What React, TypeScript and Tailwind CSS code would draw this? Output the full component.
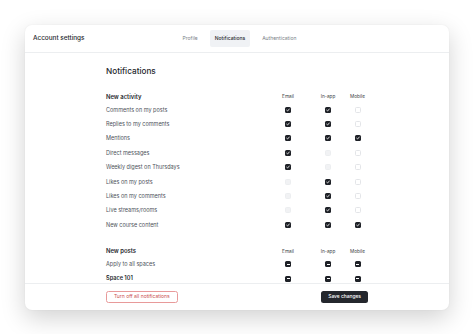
import React from "react"

type Box = "on" | "off" | "dis" | "mixed"

const ACTIVITY: { label: string; email: Box; inapp: Box; mobile: Box }[] = [
  { label: "Comments on my posts", email: "on", inapp: "on", mobile: "off" },
  { label: "Replies to my comments", email: "on", inapp: "on", mobile: "off" },
  { label: "Mentions", email: "on", inapp: "on", mobile: "on" },
  { label: "Direct messages", email: "on", inapp: "dis", mobile: "off" },
  { label: "Weekly digest on Thursdays", email: "on", inapp: "dis", mobile: "off" },
  { label: "Likes on my posts", email: "dis", inapp: "on", mobile: "off" },
  { label: "Likes on my comments", email: "dis", inapp: "on", mobile: "off" },
  { label: "Live streams/rooms", email: "dis", inapp: "on", mobile: "off" },
  { label: "New course content", email: "on", inapp: "on", mobile: "on" },
]

const POSTS: { label: string; bold?: boolean }[] = [
  { label: "Apply to all spaces" },
  { label: "Space 101", bold: true },
]

function Check({ state }: { state: Box }) {
  if (state === "off") {
    return <span className="block size-[6px] rounded-[1.5px] border-[0.5px] border-[#e3e5e8] bg-white" />
  }
  if (state === "dis") {
    return <span className="block size-[6px] rounded-[1.5px] border-[0.5px] border-[#eceef0] bg-[#f1f2f4]" />
  }
  return (
    <span className="grid size-[6px] place-items-center rounded-[1.5px] bg-[#1e2127]">
      {state === "on" ? (
        <svg viewBox="0 0 6 6" className="size-[6px]">
          <path d="M1.7 3.2 L2.6 4 L4.3 2" fill="none" stroke="white" strokeWidth="0.8" strokeLinecap="round" strokeLinejoin="round" />
        </svg>
      ) : (
        <span className="block h-[0.8px] w-[3px] bg-white" />
      )}
    </span>
  )
}

function ColumnHeads() {
  return (
    <>
      <div className="flex w-[38px] justify-center text-[4.7px] text-[#3b3f46]">Email</div>
      <div className="flex w-[42px] justify-center text-[4.7px] text-[#3b3f46]">In-app</div>
      <div className="flex w-[17px] justify-center text-[4.7px] text-[#3b3f46]">Mobile</div>
    </>
  )
}

function Row({ label, bold, boxes }: { label: string; bold?: boolean; boxes: Box[] }) {
  return (
    <div className="flex h-[14.4px] items-center">
      <div
        className={
          bold
            ? "w-[163px] text-[5.6px] font-semibold text-[#25282d]"
            : "w-[163px] text-[5.5px] text-[#4d525a]"
        }
      >
        {label}
      </div>
      <div className="flex w-[38px] justify-center">
        <Check state={boxes[0]} />
      </div>
      <div className="flex w-[42px] justify-center">
        <Check state={boxes[1]} />
      </div>
      <div className="flex w-[17px] justify-center">
        <Check state={boxes[2]} />
      </div>
    </div>
  )
}

export default function App() {
  return (
    <div className="h-[334px] w-[474px] overflow-hidden bg-white pl-[25px] pt-[25px] font-['Inter',sans-serif]">
      <div className="flex h-[285px] w-[424px] flex-col overflow-hidden rounded-[7px] bg-white shadow-[0_8px_24px_rgba(0,0,0,0.18),0_0_2px_rgba(0,0,0,0.06)]">
        <header className="grid h-[28px] shrink-0 grid-cols-[1fr_auto_1fr] items-center border-b-[0.5px] border-[#eceef0] px-[8px]">
          <div className="text-[6.4px] font-medium text-[#25282d]">Account settings</div>
          <nav className="ml-[5px] flex items-center gap-[4px] text-[5px] text-[#7a7f87]">
            <span className="px-[8px] py-[4px]">Profile</span>
            <span className="rounded-[2px] bg-[#f0f2f5] px-[5px] py-[4.5px] font-medium text-[#25282d]">Notifications</span>
            <span className="px-[8px] py-[4px]">Authentication</span>
          </nav>
          <div />
        </header>

        <div className="min-h-0 flex-1 overflow-hidden border-b-[0.5px] border-[#eceef0]">
          <div className="mx-auto w-[262px] pt-[12px]">
            <h1 className="flex h-[12px] items-center text-[8.2px] font-medium text-[#25282d]">Notifications</h1>

            <div className="mt-[14.5px] flex h-[11px] items-center">
              <div className="w-[163px] text-[5.9px] font-semibold text-[#25282d]">New activity</div>
              <ColumnHeads />
            </div>
            {ACTIVITY.map((r) => (
              <Row key={r.label} label={r.label} boxes={[r.email, r.inapp, r.mobile]} />
            ))}

            <div className="mt-[14px] flex h-[11px] items-center">
              <div className="w-[163px] text-[5.9px] font-semibold text-[#25282d]">New posts</div>
              <ColumnHeads />
            </div>
            {POSTS.map((r) => (
              <Row key={r.label} label={r.label} bold={r.bold} boxes={["mixed", "mixed", "mixed"]} />
            ))}
          </div>
        </div>

        <footer className="flex h-[26px] shrink-0 items-center">
          <div className="mx-auto flex w-[262px] items-center justify-between">
            <button
              type="button"
              className="h-[12px] rounded-[2.5px] border-[0.7px] border-[#e89a9a] px-[7px] text-[5px] text-[#c9504e]"
            >
              Turn off all notifications
            </button>
            <button
              type="button"
              className="h-[12px] rounded-[2.5px] bg-[#24272d] px-[7px] text-[4.9px] font-medium text-white"
            >
              Save changes
            </button>
          </div>
        </footer>
      </div>
    </div>
  )
}
